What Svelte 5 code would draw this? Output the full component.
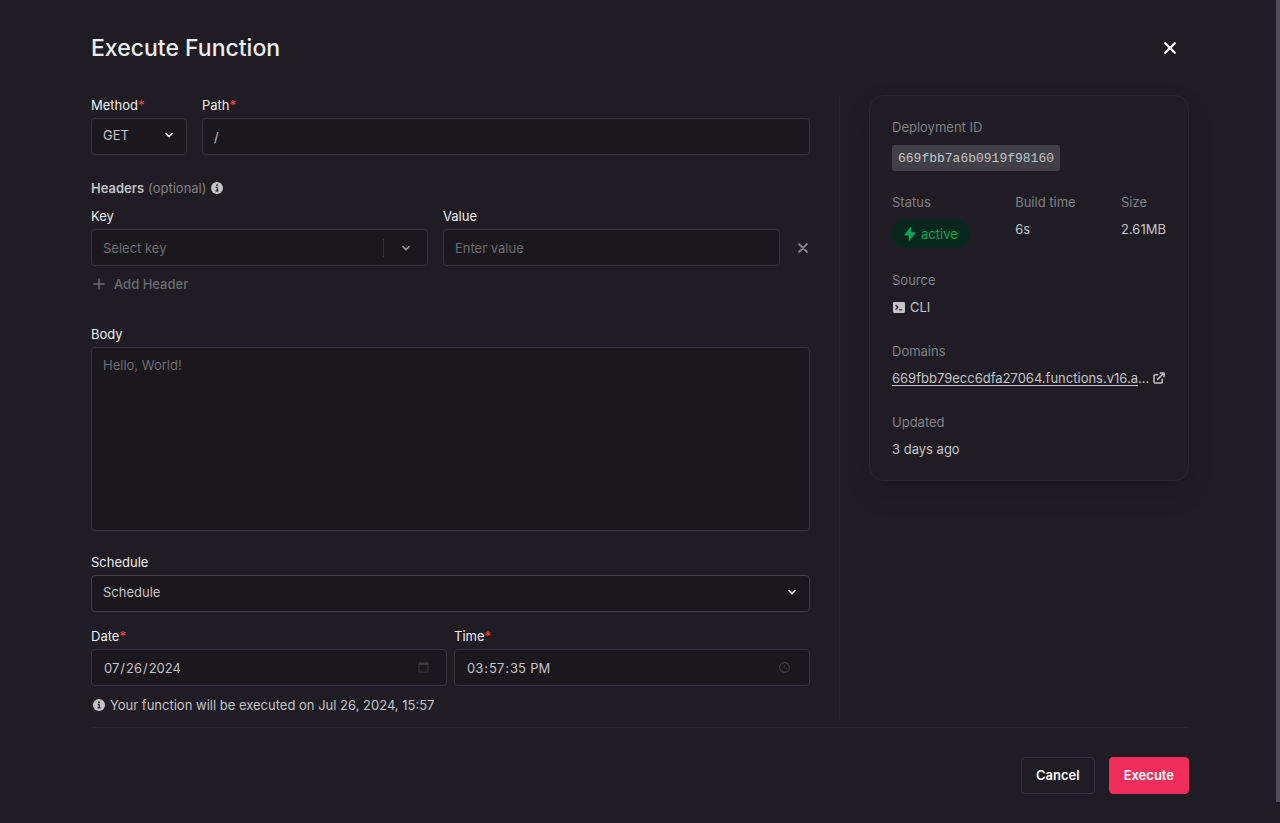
<script lang="ts">
	type Header = { key: string; value: string };

	const deployment = {
		id: '669fbb7a6b0919f98160',
		status: 'active',
		buildTime: '6s',
		size: '2.61MB',
		source: 'CLI',
		domain: '669fbb79ecc6dfa27064.functions.v16.appwrite.org',
		updated: '3 days ago'
	};

	let method = $state('GET');
	let path = $state('/');
	let headers = $state<Header[]>([{ key: '', value: '' }]);
	let body = $state('');
	let mode = $state('Schedule');
	let date = $state('2024-07-26');
	let time = $state('15:57:35');

	const when = $derived.by(() => {
		const day = new Date(`${date}T00:00:00`).toLocaleDateString('en-US', {
			month: 'short',
			day: 'numeric',
			year: 'numeric'
		});
		return `${day}, ${time.slice(0, 5)}`;
	});

	function addHeader() {
		headers.push({ key: '', value: '' });
	}

	function removeHeader(i: number) {
		if (headers.length > 1) headers.splice(i, 1);
		else headers[0] = { key: '', value: '' };
	}
</script>

{#snippet chevron()}
	<svg class="chevron" width="10" height="10" viewBox="0 0 10 10" aria-hidden="true">
		<path d="M1.9 3.5 5 6.6l3.1-3.1" fill="none" stroke="currentColor" stroke-width="1.5" stroke-linecap="round" stroke-linejoin="round" />
	</svg>
{/snippet}

{#snippet cross(size: number)}
	<svg width={size} height={size} viewBox="0 0 12 12" aria-hidden="true">
		<path d="m1.2 1.2 9.6 9.6M10.8 1.2l-9.6 9.6" fill="none" stroke="currentColor" stroke-width="2.2" stroke-linecap="round" />
	</svg>
{/snippet}

{#snippet info()}
	<svg class="info" width="12" height="12" viewBox="0 0 12 12" aria-hidden="true">
		<circle cx="6" cy="6" r="6" fill="currentColor" />
		<path d="M4.7 5.3h1.5v3.2M4.5 8.8h3.1" fill="none" stroke="#1f1d23" stroke-width="1.2" />
		<circle cx="6" cy="3.2" r="0.9" fill="#1f1d23" />
	</svg>
{/snippet}

<div class="wizard">
	<header>
		<h1>Execute Function</h1>
		<button class="icon close" aria-label="Close">{@render cross(12)}</button>
	</header>

	<form id="execute" onsubmit={(e) => e.preventDefault()}>
		<div class="main">
			<div class="row request">
				<div class="field">
					<label for="method">Method<span class="req">*</span></label>
					<div class="select">
						<select id="method" bind:value={method}>
							<option>GET</option>
							<option>POST</option>
							<option>PUT</option>
							<option>PATCH</option>
							<option>DELETE</option>
						</select>
						{@render chevron()}
					</div>
				</div>
				<div class="field">
					<label for="path">Path<span class="req">*</span></label>
					<input id="path" type="text" bind:value={path} />
				</div>
			</div>

			<div class="legend"><strong>Headers</strong> <span>(optional)</span> {@render info()}</div>

			{#each headers as header, i}
				<div class="row header">
					<div class="field">
						<label for="key-{i}">Key</label>
						<div class="combo">
							<input id="key-{i}" type="text" placeholder="Select key" bind:value={header.key} />
							<button type="button" aria-label="Show keys">{@render chevron()}</button>
						</div>
					</div>
					<div class="field">
						<label for="value-{i}">Value</label>
						<input id="value-{i}" type="text" placeholder="Enter value" bind:value={header.value} />
					</div>
					<button type="button" class="icon remove" aria-label="Remove header" onclick={() => removeHeader(i)}>
						{@render cross(10)}
					</button>
				</div>
			{/each}

			<button type="button" class="add" onclick={addHeader}>
				<svg width="12" height="12" viewBox="0 0 12 12" aria-hidden="true">
					<path d="M6 1v10M1 6h10" stroke="currentColor" stroke-width="1.6" stroke-linecap="round" />
				</svg>
				Add Header
			</button>

			<div class="field body">
				<label for="body">Body</label>
				<textarea id="body" placeholder="Hello, World!" bind:value={body}></textarea>
			</div>

			<div class="field schedule">
				<label for="mode">Schedule</label>
				<div class="select strong">
					<select id="mode" bind:value={mode}>
						<option>Now</option>
						<option>Schedule</option>
					</select>
					{@render chevron()}
				</div>
			</div>

			<div class="row datetime">
				<div class="field">
					<label for="date">Date<span class="req">*</span></label>
					<input id="date" type="date" bind:value={date} />
				</div>
				<div class="field">
					<label for="time">Time<span class="req">*</span></label>
					<input id="time" type="time" step="1" bind:value={time} />
				</div>
			</div>

			<p class="note">{@render info()} Your function will be executed on {when}</p>
		</div>

		<aside>
			<dl class="card">
				<div>
					<dt>Deployment ID</dt>
					<dd class="flush"><code>{deployment.id}</code></dd>
				</div>
				<div class="stats">
					<div>
						<dt>Status</dt>
						<dd class="flush">
							<span class="pill">
								<svg width="12" height="14" viewBox="0 0 12 14" aria-hidden="true">
									<path d="M7.2.6v4.6h3.6c.6 0 .8.5.5 1l-5.6 7.2c-.4.4-.9.2-.9-.3V8.6H1.2c-.6 0-.8-.5-.5-1L6.3.3c.4-.4.9-.2.9.3Z" fill="currentColor" />
								</svg>
								{deployment.status}
							</span>
						</dd>
					</div>
					<div>
						<dt>Build time</dt>
						<dd>{deployment.buildTime}</dd>
					</div>
					<div>
						<dt>Size</dt>
						<dd>{deployment.size}</dd>
					</div>
				</div>
				<div>
					<dt>Source</dt>
					<dd class="source">
						<svg width="12" height="11" viewBox="0 0 12 11" aria-hidden="true">
							<rect width="12" height="11" rx="1.4" fill="currentColor" />
							<path d="m2.6 3 2.3 2.3-2.3 2.3M6.2 7.8h2.6" fill="none" stroke="#1f1d23" stroke-width="1.3" />
						</svg>
						{deployment.source}
					</dd>
				</div>
				<div>
					<dt>Domains</dt>
					<dd class="domain">
						<span><a href="https://{deployment.domain}">{deployment.domain.slice(0, 36)}</a>...</span>
						<svg width="12" height="12" viewBox="0 0 12 12" aria-hidden="true">
							<path d="M4.8 2.8H1.9a.9.9 0 0 0-.9.9v6.4c0 .5.4.9.9.9h6.4c.5 0 .9-.4.9-.9V7.2M7.2 1H11v3.8M10.8 1.2 4.6 7.4" fill="none" stroke="currentColor" stroke-width="1.5" stroke-linecap="round" stroke-linejoin="round" />
						</svg>
					</dd>
				</div>
				<div>
					<dt>Updated</dt>
					<dd class="flush">{deployment.updated}</dd>
				</div>
			</dl>
		</aside>
	</form>

	<footer>
		<button type="button" class="btn">Cancel</button>
		<button type="submit" form="execute" class="btn primary">Execute</button>
	</footer>
	<div class="scrollbar"></div>
</div>

<style>
	:global(body) {
		background: #1f1d23;
	}
	.wizard {
		box-sizing: border-box;
		min-height: 100vh;
		padding: 31px 91px 29px;
		font: 13px/18px Inter, sans-serif;
		color: #c4c3c7;
		color-scheme: dark;
	}
	.wizard * {
		box-sizing: border-box;
	}
	header {
		display: flex;
		align-items: center;
		justify-content: space-between;
		height: 33px;
		padding-right: 13px;
	}
	h1 {
		margin: 0;
		font-size: 23px;
		font-weight: 500;
		line-height: 32px;
		color: #ededf0;
	}
	button {
		font: inherit;
		cursor: pointer;
	}
	.icon {
		display: flex;
		align-items: center;
		justify-content: center;
		padding: 0;
		border: none;
		background: none;
	}
	.close {
		color: #fff;
	}
	form {
		display: grid;
		grid-template-columns: minmax(0, 1fr) 350px;
		gap: 29px;
		margin-top: 31px;
		padding-bottom: 8px;
		border-bottom: 1px solid #29272e;
	}
	.main {
		padding: 1px 0 5px;
	}
	.row {
		display: grid;
	}
	.request {
		grid-template-columns: 96px 1fr;
		gap: 15px;
	}
	.header {
		grid-template-columns: 1fr 1fr 15px;
		gap: 15px;
		margin-bottom: 9px;
	}
	.datetime {
		grid-template-columns: 1fr 1fr;
		gap: 7px;
		margin-top: 15px;
	}
	label {
		display: block;
		margin-bottom: 4px;
		color: #ededf0;
	}
	.req {
		color: #ff453a;
	}
	input,
	select,
	textarea {
		display: block;
		width: 100%;
		height: 37px;
		margin: 0;
		padding: 0 11px;
		border: 1px solid #34323a;
		border-radius: 4px;
		outline: none;
		background: #1a181d;
		font: inherit;
		color: #c4c3c7;
		appearance: none;
	}
	::placeholder {
		color: #6c6b70;
		opacity: 1;
	}
	textarea {
		height: 184px;
		padding: 8px 11px;
		resize: none;
	}
	.select {
		position: relative;
	}
	.select select {
		padding-bottom: 3px;
	}
	.select .chevron {
		position: absolute;
		top: 12px;
		right: 13px;
		color: #ededf0;
		pointer-events: none;
	}
	.strong select {
		border-color: #414046;
	}
	.combo {
		display: flex;
		align-items: center;
		border: 1px solid #34323a;
		border-radius: 4px;
		background: #1a181d;
	}
	.combo input {
		flex: 1;
		height: 35px;
		border: none;
		background: none;
	}
	.combo button {
		display: flex;
		align-items: center;
		justify-content: center;
		width: 44px;
		height: 18px;
		padding: 0;
		border: none;
		border-left: 1px solid #34323a;
		background: none;
		color: #97969b;
	}
	.legend {
		display: flex;
		align-items: center;
		gap: 4px;
		margin: 24px 0 10px;
		color: #818085;
	}
	.legend strong {
		font-weight: 600;
		color: #c4c3c7;
	}
	.info {
		flex: none;
		color: #c4c3c7;
	}
	.remove {
		height: 37px;
		align-self: end;
		color: #818085;
	}
	.add {
		display: flex;
		align-items: center;
		gap: 9px;
		padding: 0 2px;
		border: none;
		background: none;
		font-weight: 500;
		color: #6c6b70;
	}
	.body {
		margin-top: 32px;
	}
	.schedule {
		margin-top: 22px;
	}
	input[type='date'],
	input[type='time'] {
		padding-right: 14px;
	}
	::-webkit-calendar-picker-indicator {
		opacity: 0.15;
	}
	.note {
		display: flex;
		align-items: center;
		gap: 5px;
		margin: 10px 0 0;
		padding-left: 2px;
	}
	aside {
		padding-left: 29px;
		border-left: 1px solid #29272e;
	}
	.card {
		display: flex;
		flex-direction: column;
		gap: 22px;
		margin: 0;
		padding: 22px;
		border: 1px solid #29272e;
		border-radius: 14px;
		background: #1f1d23;
		box-shadow: 0 12px 28px rgba(0, 0, 0, 0.12);
	}
	dt {
		margin-bottom: 9px;
		color: #818085;
	}
	dd {
		margin: 0;
		padding-bottom: 4px;
	}
	dd.flush {
		padding-bottom: 0;
	}
	code {
		display: inline-block;
		padding: 5px 6px 3px;
		border-radius: 3px;
		background: #414046;
		font: 13px/18px 'Liberation Mono', monospace;
		vertical-align: top;
	}
	.stats {
		display: flex;
		justify-content: space-between;
	}
	.pill {
		display: flex;
		align-items: center;
		gap: 5px;
		height: 28px;
		margin-bottom: 1px;
		padding: 0 12px;
		border-radius: 14px;
		background: #06281c;
		color: #00a85a;
	}
	.source {
		display: flex;
		align-items: center;
		gap: 5px;
		padding-left: 1px;
	}
	.domain {
		display: flex;
		align-items: center;
		justify-content: space-between;
		padding-right: 1px;
		white-space: nowrap;
	}
	a {
		color: inherit;
		text-underline-offset: 2px;
	}
	footer {
		display: flex;
		justify-content: flex-end;
		gap: 14px;
		margin-top: 29px;
	}
	.btn {
		height: 37px;
		padding: 0 14px 1px;
		border: 1px solid #34323a;
		border-radius: 4px;
		background: none;
		font-weight: 600;
		color: #fff;
	}
	.primary {
		border-color: #f02e5e;
		background: #f02e5e;
	}
	.scrollbar {
		position: fixed;
		top: 0;
		right: 0;
		bottom: 21px;
		width: 4px;
		background: #4f4d55;
	}
</style>
